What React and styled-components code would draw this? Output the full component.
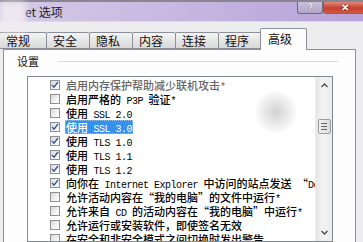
import React from "react";
import styled, { createGlobalStyle } from "styled-components";

const GlobalStyle = createGlobalStyle`
  html, body {
    margin: 0;
    padding: 0;
  }
  body {
    width: 363px;
    height: 242px;
    overflow: hidden;
    background: #eeeef1;
    font-family: "Noto Sans CJK SC", "Noto Sans", sans-serif;
  }
`;

const Window = styled.div`
  position: relative;
  width: 363px;
  height: 242px;
  overflow: hidden;
  display: flex;
  flex-direction: column;
  background: #ededf0;
`;

const TitleBar = styled.div`
  height: 20px;
  flex: none;
  border-top: 2px solid #8a8592;
  background: linear-gradient(90deg, #d4cbe7 0%, #c7b9e1 45%, #b7a2d9 100%);
  box-shadow: inset 0 -1px 0 #ddd6ec;
  display: flex;
  align-items: flex-start;
`;

const Title = styled.span`
  margin: 2px 0 0 25px;
  font-size: 12px;
  line-height: 15px;
  color: #1f1d28;
`;

const CaptionButton = styled.div`
  height: 11px;
  display: flex;
  align-items: center;
  justify-content: center;
  border: 1px solid ${(p) => (p.$close ? "#7a2d26" : "#6f6a80")};
  border-top: none;
  border-radius: 0 0 3px 3px;
  font-family: "Liberation Sans", sans-serif;
  font-weight: bold;
  font-size: 10px;
  color: #fff;
`;

const HelpButton = styled(CaptionButton)`
  margin-left: auto;
  width: 24px;
  background: linear-gradient(#c9c3dc, #aea6c8);
  color: #f3f1f8;
  text-shadow: 0 0 1px #4b4660;
`;

const CloseButton = styled(CaptionButton)`
  width: 42px;
  margin-right: -4px;
  background: linear-gradient(#e08a78, #c6402f 55%, #d25a40);
  text-shadow: 0 0 2px #5a1a12;
`;

const TabRow = styled.div`
  flex: none;
  display: flex;
  align-items: flex-end;
  padding-top: 5px;
  height: 22px;
  position: relative;
  z-index: 1;
`;

const Tab = styled.div`
  width: ${(p) => (p.$active ? 47 : p.$first ? 48 : 44)}px;
  height: ${(p) => (p.$active ? 22 : 17)}px;
  margin-left: ${(p) => (p.$first ? -1 : p.$active ? -2 : -1)}px;
  margin-bottom: ${(p) => (p.$active ? -1 : 0)}px;
  box-sizing: border-box;
  border: 1px solid #8c8f98;
  border-bottom: ${(p) => (p.$active ? "none" : "1px solid #8c8f98")};
  border-radius: 2px 2px 0 0;
  background: ${(p) =>
    p.$active ? "#fdfdfd" : "linear-gradient(#f4f4f4, #e6e6e6 50%, #d9d9d9)"};
  display: flex;
  padding: ${(p) => (p.$active ? "2px 0 0 7px" : "0 0 0 6px")};
  font-size: 12px;
  line-height: 15px;
  color: #111;
  position: relative;
  z-index: ${(p) => (p.$active ? 2 : 1)};
`;

const Pane = styled.div`
  flex: 1;
  margin: 0 7px 0 3px;
  border: 1px solid #8c8f98;
  border-bottom: none;
  background: #fdfdfd;
  display: flex;
  flex-direction: column;
`;

const GroupHead = styled.div`
  display: flex;
  align-items: center;
  margin: 5px 17px 0 13px;
  height: 12px;
  font-size: 11px;
  color: #111;
`;

const Rule = styled.div`
  flex: 1;
  margin-left: 19px;
  height: 1px;
  background: #d5dbe2;
  box-shadow: 0 1px 0 #fff;
`;

const ListBox = styled.div`
  margin: 9px 0 0 23px;
  width: 306px;
  height: 166px;
  box-sizing: border-box;
  border: 1px solid #838891;
  background: #fff;
  display: flex;
  overflow: hidden;
`;

const Items = styled.div`
  flex: 1;
  min-width: 0;
  overflow: hidden;
  padding-top: 1px;
`;

const Row = styled.div`
  height: 14px;
  display: flex;
  align-items: center;
  padding-left: 22px;
  white-space: nowrap;
  font-size: 11px;
  line-height: 14px;
  font-weight: 500;
  color: ${(p) => (p.$dim ? "#666" : "#000")};
`;

const Box = styled.span`
  flex: none;
  width: 10px;
  height: 10px;
  box-sizing: border-box;
  margin-right: 5px;
  border: 1px solid #8f9091;
  background: linear-gradient(135deg, #d9d9d9, #f7f7f7 70%, #fff);
  display: flex;
  align-items: center;
  justify-content: center;
`;

const Label = styled.span`
  display: inline-block;
  height: 14px;
  line-height: 14px;
  padding: 0 1px;
  box-sizing: border-box;
  background: ${(p) => (p.$selected ? "#3591ec" : "transparent")};
  color: ${(p) => (p.$selected ? "#fff" : "inherit")};
  outline: ${(p) => (p.$selected ? "1px dotted #9cc8f4" : "none")};
  outline-offset: -1px;
`;

const Latin = styled.span`
  font-family: "Liberation Mono", monospace;
  font-size: 10px;
  letter-spacing: -0.5px;
  font-weight: normal;
  white-space: pre;
`;

const ScrollBar = styled.div`
  flex: none;
  width: 16px;
  border-left: 1px solid #ececec;
  background: linear-gradient(90deg, #e6e6e6, #f3f3f3 40%, #ececec);
  display: flex;
  flex-direction: column;
  align-items: center;
`;

const Arrow = styled.div`
  height: 17px;
  width: 100%;
  display: flex;
  align-items: center;
  justify-content: center;
`;

const Track = styled.div`
  flex: 1;
  width: 100%;
  display: flex;
  justify-content: center;
`;

const Thumb = styled.div`
  margin-top: 25px;
  width: 13px;
  height: 15px;
  box-sizing: border-box;
  border: 1px solid #999c9f;
  border-radius: 2px;
  background: linear-gradient(90deg, #f2f2f2, #dcdcdc);
  display: flex;
  flex-direction: column;
  align-items: center;
  justify-content: center;
  gap: 2px;
  span {
    width: 6px;
    height: 1px;
    background: #666;
  }
`;

const Haze = styled.div`
  position: absolute;
  left: 0;
  top: 2px;
  width: 26px;
  height: 30px;
  background: rgba(240, 234, 240, 0.9);
  filter: blur(3px);
  z-index: 5;
`;

const Smudge = styled.div`
  position: absolute;
  left: 254px;
  top: 90px;
  width: 44px;
  height: 44px;
  border-radius: 50%;
  background: radial-gradient(circle, rgba(196, 196, 196, 0.75) 0%, rgba(210, 210, 210, 0.4) 45%, rgba(255, 255, 255, 0) 72%);
  z-index: 5;
`;

const Check = () => (
  <svg width="8" height="8" viewBox="0 0 8 8">
    <path d="M1 4 L3 6.2 L7 1" fill="none" stroke="#3d5a93" strokeWidth="1.5" />
  </svg>
);

const Chevron = ({ down }) => (
  <svg width="7" height="5" viewBox="0 0 7 5">
    <path d={down ? "M0.5 1 L3.5 4 L6.5 1" : "M0.5 4 L3.5 1 L6.5 4"} fill="none" stroke="#4a4a4a" strokeWidth="1.3" />
  </svg>
);

const withLatin = (text) =>
  text.split(/([\x20-\x7e]+)/).map((part, i) =>
    /^[\x20-\x7e]+$/.test(part) ? <Latin key={i}>{part}</Latin> : part
  );

const tabs = ["常规", "安全", "隐私", "内容", "连接", "程序", "高级"];

const options = [
  { text: "启用内存保护帮助减少联机攻击*", checked: true, dim: true },
  { text: "启用严格的 P3P 验证*" },
  { text: "使用 SSL 2.0" },
  { text: "使用 SSL 3.0", checked: true, selected: true },
  { text: "使用 TLS 1.0", checked: true },
  { text: "使用 TLS 1.1", checked: true },
  { text: "使用 TLS 1.2", checked: true },
  { text: "向你在 Internet Explorer 中访问的站点发送 “Do Not Track” 请求", checked: true },
  { text: "允许活动内容在“我的电脑”的文件中运行*" },
  { text: "允许来自 CD 的活动内容在“我的电脑”中运行*" },
  { text: "允许运行或安装软件，即使签名无效" },
  { text: "在安全和非安全模式之间切换时发出警告" },
];

export default function App() {
  return (
    <Window>
      <GlobalStyle />
      <TitleBar>
        <Title>et 选项</Title>
        <HelpButton>?</HelpButton>
        <CloseButton>✕</CloseButton>
      </TitleBar>
      <TabRow>
        {tabs.map((t, i) => (
          <Tab key={t} $first={i === 0} $active={t === "高级"}>
            {t}
          </Tab>
        ))}
      </TabRow>
      <Pane>
        <GroupHead>
          设置
          <Rule />
        </GroupHead>
        <ListBox>
          <Items>
            {options.map((o) => (
              <Row key={o.text} $dim={o.dim}>
                <Box>{o.checked && <Check />}</Box>
                <Label $selected={o.selected}>{withLatin(o.text)}</Label>
              </Row>
            ))}
          </Items>
          <ScrollBar>
            <Arrow>
              <Chevron />
            </Arrow>
            <Track>
              <Thumb>
                <span />
                <span />
                <span />
              </Thumb>
            </Track>
            <Arrow>
              <Chevron down />
            </Arrow>
          </ScrollBar>
        </ListBox>
      </Pane>
      <Haze />
      <Smudge />
    </Window>
  );
}
